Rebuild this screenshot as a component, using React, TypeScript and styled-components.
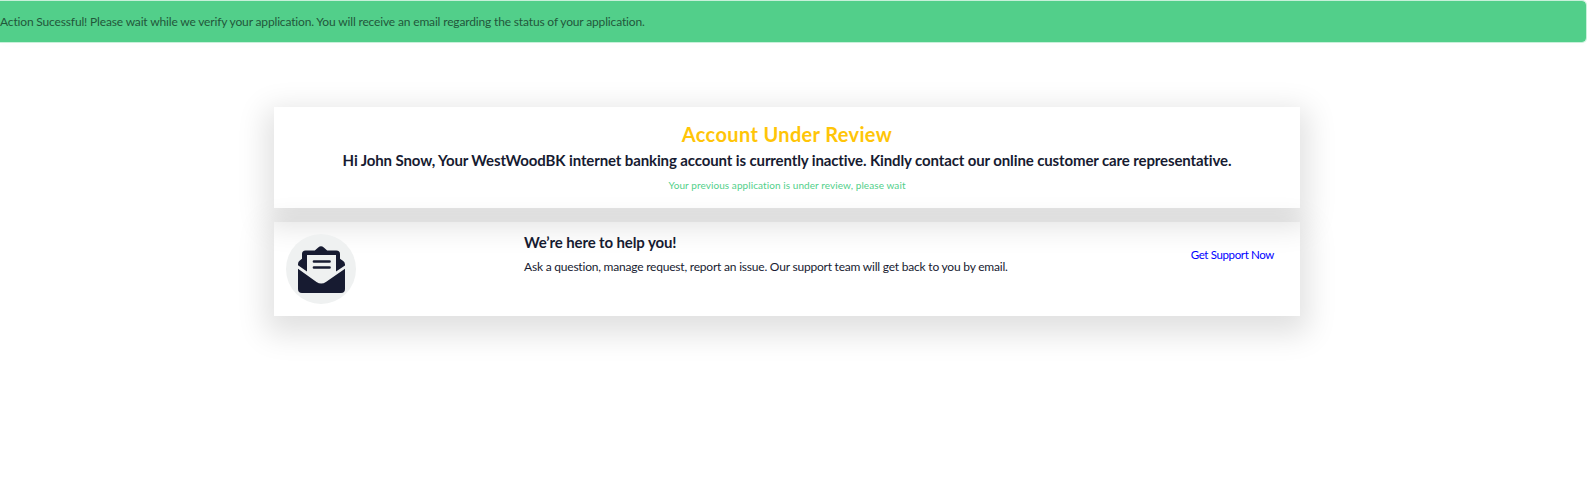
import React from "react";
import styled, { createGlobalStyle } from "styled-components";

const GlobalStyle = createGlobalStyle`
  * { box-sizing: border-box; }
  body {
    margin: 0;
    background: #fff;
    color: #171b31;
    font-family: Lato, "Liberation Sans", sans-serif;
    font-size: 12px;
    font-variant-ligatures: none;
  }
  h2, h5, p { margin: 0; }
`;

const Page = styled.div`
  min-height: 100vh;
`;

const Alert = styled.div`
  height: 43px;
  padding-top: 12px;
  border: 1px solid #c8f0da;
  border-left: 0;
  border-radius: 0 5px 5px 0;
  background: #52cf8a;
  background-clip: padding-box;
  color: #22573b;
  font-size: 12px;
  line-height: 18px;
  letter-spacing: -0.157px;
  box-shadow: 0 2px 12px rgba(0, 0, 0, 0.012);
`;

const Content = styled.main`
  width: 1026px;
  margin: 64px 0 0 274px;
  display: flex;
  flex-direction: column;
  gap: 14px;
`;

const Card = styled.section`
  box-shadow: 0 10px 28px 8px rgba(0, 0, 0, 0.12);
`;

const ReviewCard = styled(Card)`
  height: 101px;
  padding-top: 14px;
  text-align: center;
`;

const HelpCard = styled(Card)`
  height: 94px;
  padding: 12px 26px 12px 12px;
  display: flex;
  align-items: flex-start;
`;

const Title = styled.h2`
  color: #ffc508;
  font-size: 20px;
  font-weight: 700;
  line-height: 26px;
  letter-spacing: 0.35px;
`;

const Subtitle = styled.h5`
  font-size: 15px;
  font-weight: 700;
  line-height: 26px;
  letter-spacing: -0.122px;
`;

const Status = styled.p`
  margin-top: 3px;
  color: #52cf8a;
  font-size: 10px;
  line-height: 18px;
  letter-spacing: 0.08px;
`;

const IconSlot = styled.div`
  width: 238px;
  height: 70px;
  margin-top: -0.5px;
`;

const HelpText = styled.div`
  flex: 1;
  margin-top: -5px;
`;

const Description = styled.p`
  margin-top: 3px;
  font-size: 12px;
  line-height: 18px;
  letter-spacing: -0.21px;
`;

const SupportLink = styled.a`
  margin-top: 12px;
  color: #0000ff;
  font-size: 11.5px;
  line-height: 18px;
  letter-spacing: -0.36px;
  text-decoration: none;
`;

const MailIcon = () => (
  <svg width="70" height="70" viewBox="0 0 70 70" aria-hidden="true">
    <circle cx="35" cy="35" r="35" fill="#eff1f1" />
    <path
      fill="#171b31"
      d="M12 31.3V30q0-2 1.8-3.4L16 24.8V20q0-3.6 3.6-3.6h9.2l3.4-3q2.8-2.3 5.600 0l3.400 3h9.200Q54 16.400 54 20v4.800l3.200 2.300q1.800 1.400 1.800 3.400v1l-9 6V21H21v16.500z"
    />
    <path
      fill="#171b31"
      d="M12 34.700 30.500 47.900q4.700 3.200 9.400 0L59 34.700V55q0 4-4 4H16q-4 0-4-4z"
    />
    <path d="M28 27.500h15.500M28 33.500h15.500" stroke="#171b31" strokeWidth="2.700" strokeLinecap="round" />
  </svg>
);

export default function App() {
  return (
    <Page>
      <GlobalStyle />
      <Alert role="alert">
        Action Sucessful! Please wait while we verify your application. You will receive an email regarding the status of your application.
      </Alert>
      <Content>
        <ReviewCard>
          <Title>Account Under Review</Title>
          <Subtitle>
            Hi John Snow, Your WestWoodBK internet banking account is currently inactive. Kindly contact our online customer care representative.
          </Subtitle>
          <Status>Your previous application is under review, please wait</Status>
        </ReviewCard>
        <HelpCard>
          <IconSlot>
            <MailIcon />
          </IconSlot>
          <HelpText>
            <Subtitle>We’re here to help you!</Subtitle>
            <Description>
              Ask a question, manage request, report an issue. Our support team will get back to you by email.
            </Description>
          </HelpText>
          <SupportLink href="#">Get Support Now</SupportLink>
        </HelpCard>
      </Content>
    </Page>
  );
}
